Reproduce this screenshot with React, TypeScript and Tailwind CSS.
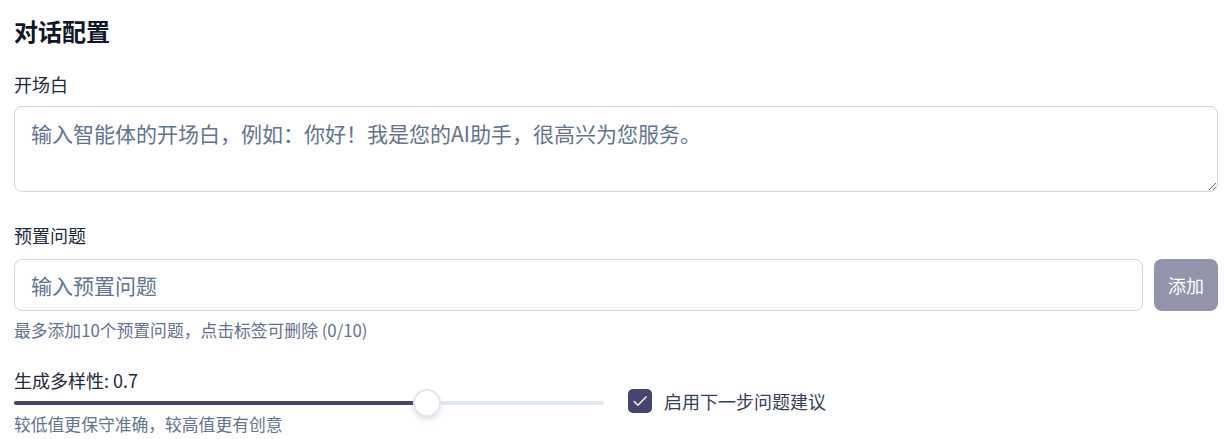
import { useState } from "react";

export default function App() {
  const [opening, setOpening] = useState("");
  const [question, setQuestion] = useState("");
  const [temp] = useState(0.7);
  const [suggest, setSuggest] = useState(true);

  return (
    <div
      className="min-h-screen bg-white pl-[14px] pr-[6px] pt-[15px] text-gray-800"
      style={{ fontFamily: '"Noto Sans CJK SC", "Noto Sans", sans-serif' }}
    >
      <h2 className="text-[24px] font-bold leading-8 text-gray-900">对话配置</h2>

      {/* --- 开场白 --- */}
      <div className="mt-[25px]">
        <label className="block text-[18px] leading-6 text-gray-800">开场白</label>
        <textarea
          value={opening}
          onChange={e => setOpening(e.target.value)}
          placeholder="输入智能体的开场白，例如：你好！我是您的AI助手，很高兴为您服务。"
          className="mt-[10px] block h-[86px] w-full rounded-lg border border-slate-300 px-4 py-3 text-[21px] leading-7 text-gray-800 placeholder:text-slate-500 focus:outline-none"
        />
      </div>

      {/* --- 预置问题 --- */}
      <div className="mt-[31px]">
        <label className="block text-[18px] leading-6 text-gray-800">预置问题</label>
        <div className="mt-3 flex gap-[11px]">
          <input
            value={question}
            onChange={e => setQuestion(e.target.value)}
            placeholder="输入预置问题"
            className="h-[52px] flex-1 rounded-lg border border-slate-300 px-4 text-[21px] text-gray-800 placeholder:text-slate-500 focus:outline-none"
          />
          <button
            disabled
            className="h-[52px] w-16 rounded-lg bg-[#9393ab] text-[18px] text-white"
          >
            添加
          </button>
        </div>
        <p className="mt-[9px] text-[16.8px] leading-5 text-slate-500">最多添加10个预置问题，点击标签可删除 (0/10)</p>
      </div>

      {/* --- 生成多样性 + 建议 --- */}
      <div className="mt-7 grid grid-cols-2 items-center gap-6">
        <div>
          <div className="text-[18px] leading-6 text-gray-800">生成多样性: {temp}</div>
          <div className="relative mt-[9px] h-1 rounded-full bg-slate-200">
            <div className="h-1 rounded-full bg-[#45456e]" style={{ width: `${temp * 100}%` }} />
            <div
              className="absolute top-1/2 h-7 w-7 -translate-x-1/2 -translate-y-1/2 rounded-full border-2 border-slate-200 bg-white shadow-md"
              style={{ left: `${temp * 100}%` }}
            />
          </div>
          <p className="mt-[9px] text-[16.8px] leading-5 text-slate-500">较低值更保守准确，较高值更有创意</p>
        </div>
        <label className="flex items-center gap-3">
          <button
            onClick={() => setSuggest(!suggest)}
            className={`flex h-6 w-6 items-center justify-center rounded-[5px] ${suggest ? "bg-[#45456e]" : "border border-slate-300 bg-white"}`}
          >
            {suggest && (
              <svg viewBox="0 0 24 24" className="h-5 w-5" fill="none" stroke="white" strokeWidth="1.6" strokeLinecap="round" strokeLinejoin="round">
                <path d="M5 12.5l4.5 4.5L19.5 7" />
              </svg>
            )}
          </button>
          <span className="text-[18px] leading-6 text-gray-700">启用下一步问题建议</span>
        </label>
      </div>
    </div>
  );
}
